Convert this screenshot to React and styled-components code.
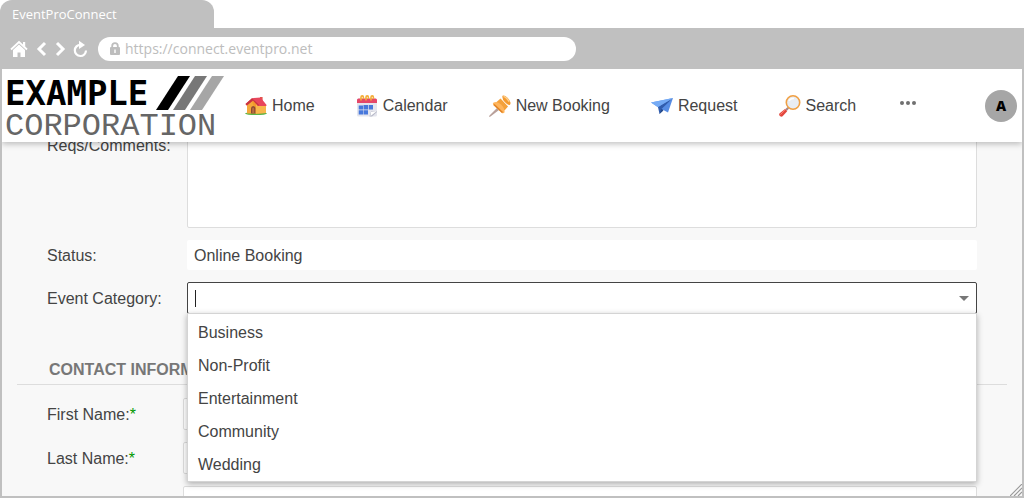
import React from "react";
import styled, { createGlobalStyle } from "styled-components";

const GlobalStyle = createGlobalStyle`
  * { box-sizing: border-box; }
  body {
    margin: 0;
    background: #fff;
    color: #444;
    font: 16px/20px "Liberation Sans", Arial, sans-serif;
  }
  input, textarea, button { font: inherit; color: inherit; }
`;

const Window = styled.div`
  display: flex;
  flex-direction: column;
  height: 100vh;
`;

const Tab = styled.div`
  width: 214px;
  height: 28px;
  padding: 0 12px;
  border-radius: 12px 12px 0 0;
  background: #c0c0c0;
  color: #fff;
  font: 13px/28px "Open Sans", sans-serif;
`;

const Toolbar = styled.div`
  display: flex;
  align-items: center;
  flex: none;
  height: 41px;
  padding: 0 10px;
  background: #c0c0c0;
`;

const ToolButton = styled.button`
  display: flex;
  justify-content: center;
  width: ${(p) => p.$width}px;
  padding: 0;
  border: 0;
  background: none;
  svg { display: block; }
`;

const AddressBar = styled.label`
  display: flex;
  align-items: center;
  gap: 5px;
  width: 478px;
  height: 24px;
  margin-left: 6px;
  padding: 0 12px;
  border-radius: 12px;
  background: #fff;
`;

const AddressInput = styled.input`
  flex: 1;
  min-width: 0;
  padding: 0;
  border: 0;
  outline: 0;
  background: none;
  && { color: #bdbdbd; font: 14px/20px "Open Sans", sans-serif; }
`;

const Page = styled.div`
  position: relative;
  display: flex;
  flex: 1;
  flex-direction: column;
  min-height: 0;
  overflow: hidden;
  border: solid #c0c0c0;
  border-width: 0 2px 2px;
  background: #f8f8f8;
`;

const Header = styled.header`
  position: relative;
  z-index: 2;
  display: flex;
  align-items: center;
  flex: none;
  height: 73px;
  padding: 0 5px 0 3px;
  background: #fff;
  box-shadow: 0 2px 6px rgba(0, 0, 0, 0.25);
`;

const Logo = styled.div`
  flex: none;
  width: 219px;
  margin-right: 21px;
  padding-top: 4px;
`;

const LogoTop = styled.div`
  display: flex;
  align-items: center;
  justify-content: space-between;
  svg { flex: none; }
`;

const LogoName = styled.span`
  color: #000;
  font: bold 34px/38px "DejaVu Sans Mono", monospace;
`;

const LogoTagline = styled.div`
  color: #666;
  font: 32px/30px "Liberation Mono", monospace;
`;

const Nav = styled.nav`
  display: flex;
  align-items: center;
  gap: 41px;
`;

const NavLink = styled.a`
  display: flex;
  align-items: center;
  gap: 5px;
  color: #444;
  text-decoration: none;
  white-space: nowrap;
`;

const MoreButton = styled.button`
  display: flex;
  gap: 2px;
  padding: 0 3px 6px;
  border: 0;
  background: none;
  i {
    width: 4px;
    height: 4px;
    border-radius: 50%;
    background: #707070;
  }
`;

const Avatar = styled.button`
  width: 32px;
  height: 32px;
  margin-left: auto;
  padding: 0;
  border: 0;
  border-radius: 50%;
  background: #a6a6a6;
  && { color: #000; font: 800 14px/32px "Open Sans", sans-serif; }
`;

const Form = styled.form`
  display: flex;
  flex-direction: column;
  gap: 12px;
  margin-top: -10px;
  padding: 0 45px;
`;

const Row = styled.div`
  display: grid;
  grid-template-columns: ${(p) => p.$label || 140}px minmax(0, 1fr);
  align-items: ${(p) => p.$align || "center"};
`;

const Label = styled.label`
  padding-top: ${(p) => p.$top || 0}px;
  white-space: nowrap;
`;

const Required = styled.span`
  color: #090;
`;

const Comments = styled.textarea`
  display: block;
  width: 100%;
  height: 96px;
  border: 1px solid #ddd;
  border-radius: 2px;
  outline: 0;
  resize: none;
  background: #fff;
`;

const TextInput = styled.input`
  width: 100%;
  height: ${(p) => (p.$plain ? 30 : 32)}px;
  padding: ${(p) => (p.$plain ? "2px 7px 0" : "0 7px")};
  border: ${(p) => (p.$plain ? "0" : "1px solid #ddd")};
  border-radius: 2px;
  outline: 0;
  background: #fff;
`;

const Combo = styled.div`
  position: relative;
`;

const ComboInput = styled(TextInput)`
  display: block;
  border-color: #444;
`;

const Caret = styled.span`
  position: absolute;
  top: 8px;
  left: 8px;
  width: 1px;
  height: 17px;
  background: #222;
`;

const ComboToggle = styled.button`
  position: absolute;
  top: 0;
  right: 0;
  width: 26px;
  height: 32px;
  padding: 0;
  border: 0;
  background: none;
  &::before {
    content: "";
    display: block;
    width: 0;
    margin: 0 auto;
    border: 5px solid transparent;
    border-top-color: #777;
    border-bottom: 0;
  }
`;

const Options = styled.ul`
  position: absolute;
  z-index: 1;
  top: 31px;
  left: 0;
  right: 0;
  margin: 0;
  padding: 2px 0 0;
  border: 1px solid #d4d4d4;
  background: #fff;
  box-shadow: 0 2px 6px rgba(0, 0, 0, 0.3);
  list-style: none;
`;

const Option = styled.li`
  padding: 0 10px;
  line-height: 33px;
`;

const SectionTitle = styled.h2`
  margin: 33px -30px 1px;
  padding: 0 32px 4px;
  border-bottom: 1px solid #ddd;
  color: #777;
  font-size: 16px;
  line-height: 21px;
`;

const Grip = styled.svg`
  position: absolute;
  right: 0;
  bottom: 0;
`;

const HouseIcon = () => (
  <svg width="22" height="22" viewBox="0 0 22 22">
    <ellipse cx="11" cy="18.6" rx="11" ry="1.5" fill="#5cb548" />
    <path d="M2 9l5-4 5 5v8.5H2z" fill="#f5a83a" />
    <path d="M7 6h9l5 5v7L11 18.8z" fill="#f29a2c" />
    <path d="M11 18.8V9l10 2v7z" fill="#f8b64c" />
    <path d="M15 2h2.600v5H15z" fill="#e2574c" />
    <path d="M7 3.200l8.500-.8 6.300 7.800-1 .9H13L8 5.400l-6.200 5L.5 9z" fill="#e8465c" />
    <path d="M7 3.200L.5 9l1.300 1.400L8 5.400l5 5.700 1.200-1z" fill="#c9353f" />
    <path d="M6 18.600v-5q0-2.600 2.200-2.600t2.200 2.600v5z" fill="#8c4b32" />
    <path d="M7.200 18v-4q0-1.600 1-1.600t1 1.600v4z" fill="#b96d42" />
  </svg>
);

const CalendarIcon = () => (
  <svg width="22" height="22" viewBox="0 0 22 22">
    <rect x="1" y="3.500" width="20" height="18" rx="1.500" fill="#e4e5ed" />
    <path d="M1 8V5q0-1.500 1.500-1.500h17Q21 3.500 21 5v3z" fill="#e54769" />
    <g fill="none" stroke="#f4ad37" strokeWidth="1.600">
      <path d="M5 5.500V2.200q0-1.300 1.200-1.300T7.400 2.200V4" />
      <path d="M10 5.500V2.200q0-1.300 1.200-1.300t1.200 1.300V4" />
      <path d="M15 5.500V2.200q0-1.300 1.200-1.300t1.200 1.300V4" />
    </g>
    <path d="M7.500 10H12v4.500H7.500zM12.700 10H17v4.500h-4.300zM2.700 15.200H7v4.300H2.700zM7.500 15.200H12v4.300H7.500zM2.700 10.500H7v4H2.700z" fill="#4778dc" />
    <path d="M13.500 21.500l1.500-5 6-.5v1l-5 4.500z" fill="#b8bac8" />
    <path d="M15 17l6-1-6.500 5z" fill="#fff" />
  </svg>
);

const PinIcon = () => (
  <svg width="22" height="22" viewBox="0 0 22 22">
    <path d="M8 13l2 2-8.500 6.500L0 22l.5-1.500z" fill="#b8a09a" />
    <path d="M11.500 3.500l7.500 8-3.500 4-8.500-8z" fill="#f4a13b" />
    <path d="M4.600 7.600Q8 5.500 12 9.500t3.500 8q-1.200 1.500-3 .3L4.200 10q-.8-1.400.4-2.400z" fill="#ffb55c" />
    <path d="M5 9.500l8.500 8" stroke="#df8125" strokeWidth="1.500" />
    <path d="M13.500.8q1.700-1.300 4.500 1.400t3.400 5q.5 1.800-.8 2.700t-4.600-2.600-2.500-6.500z" fill="#f39a30" />
    <path d="M14.500 1.500q2.500.2 5.700 5.200" stroke="#ffd08c" strokeWidth="1.500" fill="none" />
  </svg>
);

const PlaneIcon = () => (
  <svg width="22" height="22" viewBox="0 0 22 22">
    <path d="M0 7.500L22 3 8 13z" fill="#699eee" />
    <path d="M7 12L22 3 8.500 19z" fill="#315dae" />
    <path d="M10.500 14L22 3l-5 14.500z" fill="#578de4" />
    <path d="M10.500 14l2 1.500-4 3.500z" fill="#244889" />
    <path d="M0 7.500L22 3 7 12z" fill="#75abf5" />
  </svg>
);

const SearchIcon = () => (
  <svg width="22" height="22" viewBox="0 0 22 22">
    <path d="M8.500 12l1.600 1.600-2.300 2.300-1.600-1.600z" fill="#a98886" />
    <path d="M6 14l2.200 2.200-4.600 5q-1.300 1-2.700-.3t-.2-2.600z" fill="#e2473e" />
    <path d="M6 14.800l-4.600 4.800" stroke="#ff8172" strokeWidth="1" />
    <circle cx="14" cy="7.500" r="6.700" fill="#e9edf3" stroke="#f0a044" strokeWidth="1.600" />
    <path d="M10 6q1.500-3 5-2.500" stroke="#fff" strokeWidth="1.500" fill="none" />
  </svg>
);

const navItems = [
  ["Home", HouseIcon],
  ["Calendar", CalendarIcon],
  ["New Booking", PinIcon],
  ["Request", PlaneIcon],
  ["Search", SearchIcon],
];

const categories = ["Business", "Non-Profit", "Entertainment", "Community", "Wedding"];

export default function App() {
  return (
    <Window>
      <GlobalStyle />
      <Tab>EventProConnect</Tab>
      <Toolbar>
        <ToolButton $width={18} aria-label="Home page">
          <svg width="18" height="18" viewBox="0 0 18 18" fill="#fff">
            <path d="M3 10l6-5.500L15 10v7h-4.500v-4.500h-3V17H3z" />
            <path d="M1 9.500l8-7.500 8 7.500" fill="none" stroke="#fff" strokeWidth="1.800" />
            <path d="M13 2h2.200v5L13 5z" />
          </svg>
        </ToolButton>
        <ToolButton $width={26} aria-label="Back">
          <svg width="12" height="16" viewBox="0 0 12 16" fill="none" stroke="#fff" strokeWidth="3">
            <path d="M10 2L4 8l6 6" />
          </svg>
        </ToolButton>
        <ToolButton $width={14} aria-label="Forward">
          <svg width="12" height="16" viewBox="0 0 12 16" fill="none" stroke="#fff" strokeWidth="3">
            <path d="M2 2l6 6-6 6" />
          </svg>
        </ToolButton>
        <ToolButton $width={24} aria-label="Reload">
          <svg width="16" height="18" viewBox="0 0 16 18">
            <path d="M8.500 4.800A5.600 5.600 0 1 0 14 10.500" fill="none" stroke="#fff" strokeWidth="2.200" />
            <path d="M7 .8l6 4.200-6 4z" fill="#fff" />
          </svg>
        </ToolButton>
        <AddressBar>
          <svg width="10" height="13" viewBox="0 0 10 13">
            <path d="M2.200 6V4a2.800 2.800 0 0 1 5.600 0v2" fill="none" stroke="#bdbdbd" strokeWidth="1.800" />
            <rect y="5" width="10" height="8" rx="1" fill="#bdbdbd" />
            <path d="M4.300 7.500h1.400V11H4.300z" fill="#fff" />
          </svg>
          <AddressInput aria-label="Address" defaultValue="https://connect.eventpro.net" />
        </AddressBar>
      </Toolbar>
      <Page>
        <Header>
          <Logo>
            <LogoTop>
              <LogoName>EXAMPLE</LogoName>
              <svg width="68" height="34" viewBox="0 0 68 34">
                <path d="M22 0h12L12 34H0z" fill="#000" />
                <path d="M39 0h12L29 34H17z" fill="#777" />
                <path d="M56 0h12L46 34H34z" fill="#a6a6a6" />
              </svg>
            </LogoTop>
            <LogoTagline>CORPORATION</LogoTagline>
          </Logo>
          <Nav>
            {navItems.map(([name, Icon]) => (
              <NavLink href="#" key={name}>
                <Icon />
                {name}
              </NavLink>
            ))}
            <MoreButton aria-label="More">
              <i />
              <i />
              <i />
            </MoreButton>
          </Nav>
          <Avatar aria-label="Account">A</Avatar>
        </Header>
        <Form>
          <Row $align="start">
            <Label htmlFor="comments" $top={4}>Reqs/Comments:</Label>
            <Comments id="comments" />
          </Row>
          <Row>
            <Label htmlFor="status" $top={2}>Status:</Label>
            <TextInput $plain id="status" readOnly value="Online Booking" />
          </Row>
          <Row>
            <Label htmlFor="category" $top={2}>Event Category:</Label>
            <Combo>
              <ComboInput id="category" role="combobox" aria-expanded="true" aria-controls="categories" />
              <Caret />
              <ComboToggle type="button" aria-label="Show categories" />
              <Options id="categories" role="listbox">
                {categories.map((name) => (
                  <Option role="option" key={name}>{name}</Option>
                ))}
              </Options>
            </Combo>
          </Row>
          <SectionTitle>CONTACT INFORMATION</SectionTitle>
          <Row $label={136}>
            <Label htmlFor="first" $top={2}>First Name:<Required>*</Required></Label>
            <TextInput id="first" />
          </Row>
          <Row $label={136}>
            <Label htmlFor="last" $top={2}>Last Name:<Required>*</Required></Label>
            <TextInput id="last" />
          </Row>
          <Row $label={136}>
            <span />
            <TextInput aria-label="Company" />
          </Row>
        </Form>
        <Grip width="12" height="12" viewBox="0 0 12 12" stroke="#999" strokeWidth="1.200">
          <path d="M0 12L12 0M4 12l8-8M8 12l4-4" />
        </Grip>
      </Page>
    </Window>
  );
}
